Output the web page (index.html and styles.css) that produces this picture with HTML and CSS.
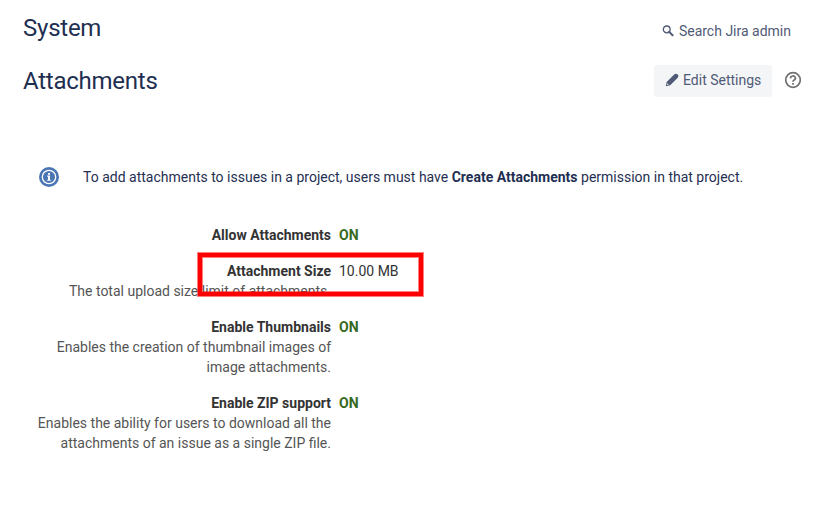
FILE: index.html
```html
<!DOCTYPE html>
<html lang="en">
<head>
<meta charset="utf-8">
<title>Attachments</title>
<link rel="stylesheet" href="styles.css">
</head>
<body>
<header class="top">
  <h1>System</h1>
  <a class="search"><svg width="12" height="12" viewBox="0 0 12 12"><circle cx="4.7" cy="4.4" r="3.4" fill="none" stroke="#505a76" stroke-width="1.3"/><path d="M7.2 6.9L10.6 10.3" stroke="#505a76" stroke-width="2" stroke-linecap="round"/></svg><span>Search Jira admin</span></a>
</header>
<section class="title">
  <h2>Attachments</h2>
  <button class="edit"><svg width="14" height="14" viewBox="0 0 14 14"><path d="M.8 13.3L1.7 9.1 9.2 1.6q1.8-1.6 3.5 0 1.4 1.6-.2 3.3L5.2 12.2z" fill="#505a76"/><path d="M2.4 10.3l1.3 1.3-1.8.5z" fill="#f4f5f7"/></svg><span>Edit Settings</span></button>
  <svg class="help" width="18" height="18" viewBox="0 0 18 18" fill="none" stroke="#707070" stroke-width="1.7"><circle cx="9" cy="9" r="7.3"/><path d="M6.6 7.3a2.4 2.2 0 1 1 3.6 1.7Q9 9.6 9 10.7M9 12v1.7"/></svg>
</section>
<section class="notice">
  <svg width="20" height="20" viewBox="0 0 20 20"><circle cx="10" cy="10" r="10" fill="#4a76b5"/><circle cx="10" cy="10" r="6.7" fill="none" stroke="#fff" stroke-width="1.3"/><path d="M9 6h2v1.7H9zM8.2 8.6H11v4.1h.8v1.1H8.2v-1.1H9v-3h-.8z" fill="#fff"/></svg>
  <p>To add attachments to issues in a project, users must have <b>Create Attachments</b> permission in that project.</p>
</section>
<main class="settings">
  <div class="row"><div class="label"><b>Allow Attachments</b></div><div class="on">ON</div></div>
  <div class="row"><div class="label"><b>Attachment Size</b><p>The total upload size limit of attachments.</p></div><div>10.00 MB</div><i class="marker"></i></div>
  <div class="row"><div class="label"><b>Enable Thumbnails</b><p>Enables the creation of thumbnail images of<br>image attachments.</p></div><div class="on">ON</div></div>
  <div class="row"><div class="label"><b>Enable ZIP support</b><p>Enables the ability for users to download all the<br>attachments of an issue as a single ZIP file.</p></div><div class="on">ON</div></div>
</main>
</body>
</html>
```
FILE: styles.css
```css
* { box-sizing: border-box; }
body { margin: 0; background: #fff; color: #1f2f52; font: 14px/20px Roboto, sans-serif; }
h1, h2, p { margin: 0; }
h1, h2 { font-size: 24px; line-height: 28px; font-weight: 400; letter-spacing: -0.01em; }
.top { display: flex; justify-content: space-between; padding: 14px 28px 0 23px; height: 65px; }
.search { display: flex; gap: 5px; height: 20px; margin-top: 7px; color: #505a76; }
.search svg { margin-top: 4px; }
.title { display: flex; align-items: flex-start; height: 102px; padding: 0 17px 0 23px; }
.title h2 { margin: 2px auto 0 0; }
.edit { display: flex; align-items: center; gap: 4px; width: 118px; height: 32px; padding: 0 0 2px 11px; border: 0; border-radius: 3px; background: #f4f5f7; color: #505a76; font: inherit; white-space: nowrap; }
.help { margin: 6px 0 0 12px; }
.notice { display: flex; gap: 24px; height: 58px; padding-left: 39px; }
.settings { color: #333; }
.row { display: flex; gap: 8px; position: relative; margin-bottom: 16px; }
.label { width: 331px; text-align: right; }
.label b { display: block; }
.label p { color: #555; }
.on { color: #35691e; font-weight: 700; }
.marker { position: absolute; left: 198px; top: -8px; width: 225px; height: 43px; border: 4px solid #f00; box-shadow: 0 0 0 1px rgba(255, 0, 0, .5), inset 0 0 0 1px rgba(255, 0, 0, .5); }
```
